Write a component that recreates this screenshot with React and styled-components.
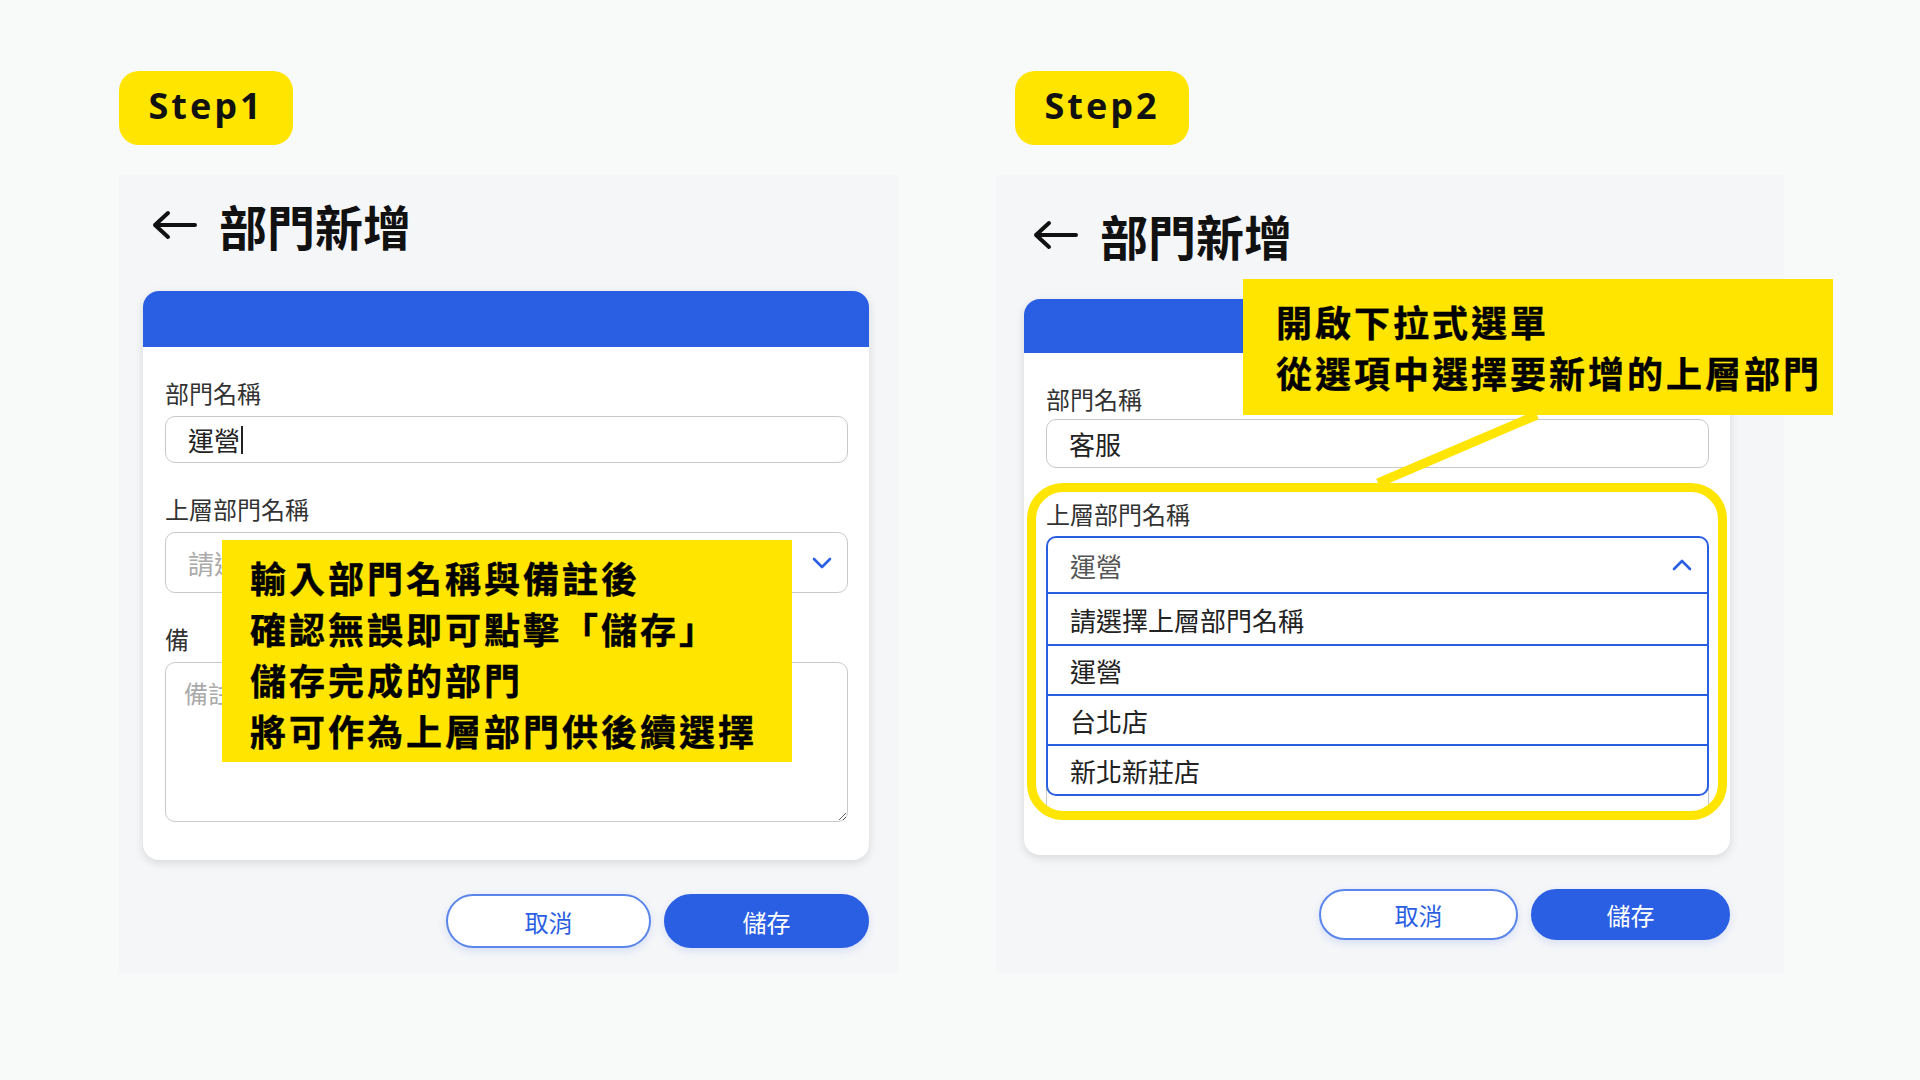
import React from 'react';
import styled, { createGlobalStyle } from 'styled-components';

const BLUE = '#2b5fe3';
const YELLOW = '#ffe500';
const CJK = '"Noto Sans CJK TC", "Noto Sans", sans-serif';

const GlobalStyle = createGlobalStyle`
    body {
        margin: 0;
        background: #f8f9f9;
        font-family: ${CJK};
    }
`;

const BackArrow = () => (
    <svg width="46" height="30" viewBox="0 0 46 30">
        <path d="M44 15 H4 M17 3 L4 15 L17 27" fill="none" stroke="#111" strokeWidth="4" strokeLinecap="round" strokeLinejoin="round" />
    </svg>
);

const Chevron = ({ up }) => (
    <svg width="20" height="12" viewBox="0 0 20 12">
        <path d={up ? 'M2 10 L10 2 L18 10' : 'M2 2 L10 10 L18 2'} fill="none" stroke={BLUE} strokeWidth="2.6" strokeLinecap="round" strokeLinejoin="round" />
    </svg>
);

const FormCard = ({ step }) => {
    const two = step === 2;
    return (
        <Card $top={two ? 38 : 40}>
            <CardHeader $h={two ? 54 : 56} />
            <CardBody $bottom={two ? 40 : 38}>
                <Field $gap={two ? 4 : 7}>
                    <Label>部門名稱</Label>
                    <TextBox $h={two ? 49 : 47}>
                        {two ? '客服' : '運營'}
                        {!two && <Caret />}
                    </TextBox>
                </Field>
                <Field $gap={two ? 6 : 7}>
                    <Label>上層部門名稱</Label>
                    {two ? (
                        <SelectWrap>
                            <SelectBox $h={58} $open>
                                <SelectValue>運營</SelectValue>
                                <Chevron up />
                            </SelectBox>
                            <OptionList>
                                <Option>請選擇上層部門名稱</Option>
                                <Option>運營</Option>
                                <Option>台北店</Option>
                                <Option>新北新莊店</Option>
                            </OptionList>
                        </SelectWrap>
                    ) : (
                        <SelectWrap>
                            <SelectBox $h={61}>
                                <SelectValue $placeholder>請選擇上層部門名稱</SelectValue>
                                <Chevron />
                            </SelectBox>
                        </SelectWrap>
                    )}
                </Field>
                <Field $gap={two ? 6 : 7}>
                    <Label $spread={40}>備註</Label>
                    <NoteArea $h={two ? 153 : 160} placeholder="備註" readOnly />
                </Field>
            </CardBody>
        </Card>
    );
};

const App = () => {
    return (
        <>
            <GlobalStyle />
            <Page>
                <Column $w={779}>
                    <StepBadge>Step1</StepBadge>
                    <Panel $pad="0 29px 0 24px">
                        <TitleRow $top={24}>
                            <BackArrow />
                            <Title>部門新增</Title>
                        </TitleRow>
                        <FormCard step={1} />
                        <ButtonRow>
                            <PillButton $w={205} $h={54}>取消</PillButton>
                            <PillButton $w={205} $h={54} $primary>儲存</PillButton>
                        </ButtonRow>
                        <Note $left={103} $top={365} $w={570} $h={222} $pt={12} $pl={28}>
                            <div>輸入部門名稱與備註後</div>
                            <div>確認無誤即可點擊「儲存」</div>
                            <div>儲存完成的部門</div>
                            <div>將可作為上層部門供後續選擇</div>
                        </Note>
                    </Panel>
                </Column>
                <Column $w={788}>
                    <StepBadge $offset={19}>Step2</StepBadge>
                    <Panel $pad="0 54px 0 28px">
                        <TitleRow $top={34}>
                            <BackArrow />
                            <Title>部門新增</Title>
                        </TitleRow>
                        <FormCard step={2} />
                        <ButtonRow>
                            <PillButton $w={199} $h={51}>取消</PillButton>
                            <PillButton $w={199} $h={51} $primary>儲存</PillButton>
                        </ButtonRow>
                        <Highlight />
                        <Connector width="190" height="90" viewBox="0 0 190 90">
                            <line x1="171" y1="10" x2="12" y2="78" stroke={YELLOW} strokeWidth="9" />
                        </Connector>
                        <Note $left={247} $top={104} $w={590} $h={136} $pt={17} $pl={33}>
                            <div>開啟下拉式選單</div>
                            <div>從選項中選擇要新增的上層部門</div>
                        </Note>
                    </Panel>
                </Column>
            </Page>
        </>
    );
};

export default App;


// Styled Components

const Page = styled.div`
    width: 1920px;
    height: 1080px;
    box-sizing: border-box;
    display: flex;
    align-items: flex-start;
    gap: 98px;
    padding: 71px 0 0 119px;
`;

const Column = styled.div`
    width: ${p => p.$w}px;
    display: flex;
    flex-direction: column;
    gap: 30px;
`;

const StepBadge = styled.div`
    width: 174px;
    height: 74px;
    box-sizing: border-box;
    padding-bottom: 5px;
    margin-left: ${p => p.$offset || 0}px;
    border-radius: 20px;
    background: ${YELLOW};
    display: flex;
    align-items: center;
    justify-content: center;
    font-family: "Open Sans", "Noto Sans", sans-serif;
    font-weight: 700;
    font-size: 36px;
    letter-spacing: 3px;
    color: #111;
`;

const Panel = styled.div`
    position: relative;
    height: 798px;
    box-sizing: border-box;
    padding: ${p => p.$pad};
    background: #f5f6f8;
    display: flex;
    flex-direction: column;
`;

const TitleRow = styled.div`
    height: 52px;
    margin: ${p => p.$top}px 0 0 8px;
    display: flex;
    align-items: center;
    gap: 22px;
`;

const Title = styled.h1`
    margin: 0;
    font-size: 48px;
    font-weight: 700;
    line-height: 1;
    color: #111;
`;

const Card = styled.div`
    margin-top: ${p => p.$top}px;
    background: #fff;
    border-radius: 16px;
    box-shadow: 0 3px 10px rgba(0, 0, 0, 0.12);
`;

const CardHeader = styled.div`
    height: ${p => p.$h}px;
    background: ${BLUE};
    border-radius: 16px 16px 0 0;
`;

const CardBody = styled.div`
    padding: 30px 21px ${p => p.$bottom}px 22px;
    display: flex;
    flex-direction: column;
    gap: 30px;
`;

const Field = styled.div`
    display: flex;
    flex-direction: column;
    gap: ${p => p.$gap}px;
`;

const Label = styled.label`
    font-size: 24px;
    line-height: 32px;
    color: #333;
    letter-spacing: ${p => p.$spread || 0}px;
`;

const TextBox = styled.div`
    height: ${p => p.$h}px;
    box-sizing: border-box;
    padding: 0 22px;
    border: 1.5px solid #c9c9c9;
    border-radius: 10px;
    background: #fff;
    display: flex;
    align-items: center;
    font-size: 26px;
    color: #222;
`;

const Caret = styled.span`
    width: 2px;
    height: 28px;
    margin-left: 1px;
    background: #222;
`;

const SelectWrap = styled.div`
    position: relative;
`;

const SelectBox = styled.div`
    height: ${p => p.$h}px;
    box-sizing: border-box;
    padding: 0 15px 0 22px;
    border: ${p => (p.$open ? `2px solid ${BLUE}` : '1.5px solid #c9c9c9')};
    border-radius: ${p => (p.$open ? '10px 10px 0 0' : '10px')};
    background: #fff;
    display: flex;
    align-items: center;
    justify-content: space-between;
`;

const SelectValue = styled.span`
    font-size: 26px;
    color: ${p => (p.$placeholder ? '#aaa' : '#555')};
`;

const OptionList = styled.div`
    position: absolute;
    top: 100%;
    left: 0;
    right: 0;
    z-index: 2;
    background: #fff;
    border: 2px solid ${BLUE};
    border-top: none;
    border-radius: 0 0 10px 10px;
    overflow: hidden;
`;

const Option = styled.div`
    height: 50px;
    box-sizing: border-box;
    padding-left: 22px;
    display: flex;
    align-items: center;
    font-size: 26px;
    color: #222;

    & + & {
        border-top: 2px solid ${BLUE};
    }
`;

const NoteArea = styled.textarea`
    height: ${p => p.$h}px;
    box-sizing: border-box;
    padding: 12px 18px;
    border: 1.5px solid #c9c9c9;
    border-radius: 10px;
    resize: vertical;
    outline: none;
    font-family: ${CJK};
    font-size: 24px;
    color: #222;

    &::placeholder {
        color: #aaa;
    }
`;

const ButtonRow = styled.div`
    margin-top: 34px;
    display: flex;
    justify-content: flex-end;
    gap: 13px;
`;

const PillButton = styled.button`
    width: ${p => p.$w}px;
    height: ${p => p.$h}px;
    border-radius: 999px;
    border: 2px solid ${p => (p.$primary ? BLUE : '#5a85ea')};
    background: ${p => (p.$primary ? BLUE : '#fff')};
    color: ${p => (p.$primary ? '#fff' : BLUE)};
    font-family: ${CJK};
    font-size: 24px;
    box-shadow: 0 3px 8px rgba(43, 95, 227, 0.15);
    cursor: pointer;
`;

const Note = styled.div`
    position: absolute;
    left: ${p => p.$left}px;
    top: ${p => p.$top}px;
    width: ${p => p.$w}px;
    height: ${p => p.$h}px;
    box-sizing: border-box;
    padding: ${p => p.$pt}px 0 0 ${p => p.$pl}px;
    z-index: 5;
    background: ${YELLOW};
    font-family: ${CJK};
    font-size: 36px;
    font-weight: 700;
    line-height: 51px;
    letter-spacing: 3px;
    -webkit-text-stroke: 0.4px #000;
    color: #000;
    white-space: nowrap;
`;

const Highlight = styled.div`
    position: absolute;
    left: 31px;
    top: 308px;
    width: 700px;
    height: 337px;
    box-sizing: border-box;
    border: 9px solid ${YELLOW};
    border-radius: 36px;
    z-index: 4;
    pointer-events: none;
`;

const Connector = styled.svg`
    position: absolute;
    left: 370px;
    top: 230px;
    z-index: 4;
`;
